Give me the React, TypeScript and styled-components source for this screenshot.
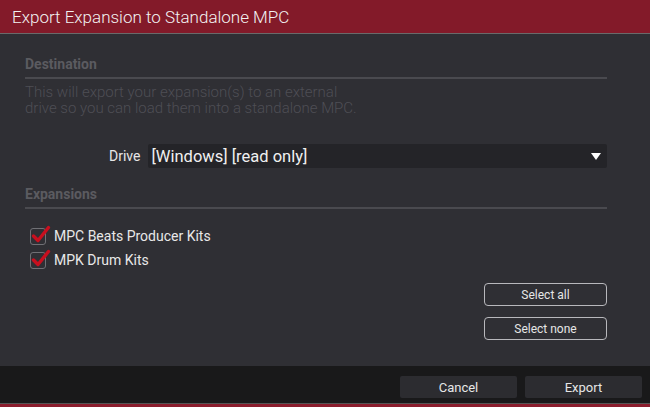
import { FC, useState } from 'react';
import styled, { createGlobalStyle } from 'styled-components';

const GlobalStyle = createGlobalStyle`
  html, body {
    margin: 0;
    padding: 0;
    background: #2f2f34;
  }
  body {
    font-family: Roboto, "Liberation Sans", sans-serif;
  }
`;

const Window = styled.div`
  width: 650px;
  height: 407px;
  display: flex;
  flex-direction: column;
  background: #2f2f34;
  overflow: hidden;
`;

const TitleBar = styled.div`
  height: 33px;
  flex-shrink: 0;
  background: #831a29;
  border-bottom: 1px solid #6a6a6a;
  display: flex;
  align-items: center;
  padding-left: 12px;
  color: #f2f2f2;
  font-size: 17px;
  font-weight: 300;
`;

const Body = styled.div`
  flex: 1;
  padding: 22px 43px 0 25px;
  display: flex;
  flex-direction: column;
`;

const SectionTitle = styled.div`
  color: #5b5b60;
  font-weight: bold;
  font-size: 14px;
  line-height: 16px;
  padding-bottom: 5px;
  border-bottom: 2px solid #4a4a4f;
`;

const Description = styled.div`
  color: #4e4e54;
  font-size: 15px;
  font-weight: 300;
  line-height: 16px;
  margin-top: 5px;
  width: 345px;
`;

const DriveRow = styled.div`
  display: flex;
  align-items: center;
  margin-top: 28px;
  padding-left: 84px;
  gap: 8px;
`;

const DriveLabel = styled.div`
  color: #e6e6e6;
  font-size: 14px;
`;

const Select = styled.div`
  flex: 1;
  height: 24px;
  background: #242428;
  border-radius: 2px;
  display: flex;
  align-items: center;
  justify-content: space-between;
  padding: 0 6px 0 3px;
  color: #f0f0f0;
  font-size: 16.5px;
`;

const Arrow = styled.div`
  width: 0;
  height: 0;
  border-left: 5px solid transparent;
  border-right: 5px solid transparent;
  border-top: 7px solid #ffffff;
`;

const ExpansionsTitle = styled(SectionTitle)`
  margin-top: 18px;
`;

const List = styled.div`
  margin-top: 18px;
  padding-left: 5px;
  display: flex;
  flex-direction: column;
  gap: 6px;
`;

const Row = styled.label`
  display: flex;
  align-items: center;
  height: 18px;
  gap: 8px;
  color: #e8e8e8;
  font-size: 14px;
  cursor: pointer;
`;

const Box = styled.span`
  position: relative;
  width: 14px;
  height: 15px;
  border: 1.5px solid #707075;
  border-radius: 3px;
  flex-shrink: 0;
`;

const Tick = styled.svg`
  position: absolute;
  left: 0px;
  top: -5px;
`;

const Buttons = styled.div`
  margin-top: 14px;
  display: flex;
  flex-direction: column;
  align-items: flex-end;
  gap: 11px;
`;

const OutlineButton = styled.div`
  width: 121px;
  height: 21px;
  border: 1.5px solid #b8b8bc;
  border-radius: 4px;
  display: flex;
  align-items: center;
  justify-content: center;
  color: #e6e6e6;
  font-size: 12px;
  cursor: pointer;
`;

const Footer = styled.div`
  height: 38px;
  flex-shrink: 0;
  background: #19191a;
  display: flex;
  justify-content: flex-end;
  align-items: flex-start;
  padding: 10px 8px 0 0;
  gap: 8px;
  box-sizing: border-box;
  border-bottom: 1px solid #555;
`;

const FooterButton = styled.div`
  width: 117px;
  height: 22px;
  background: #2c2c30;
  border-radius: 2px;
  display: flex;
  align-items: center;
  justify-content: center;
  color: #e6e6e6;
  font-size: 13px;
  cursor: pointer;
`;

const BottomStripe = styled.div`
  height: 3px;
  background: #8b1d2d;
  flex-shrink: 0;
`;

const Checkbox: FC<{ checked: boolean }> = ({ checked }) => (
  <Box>
    {checked && (
      <Tick width="20" height="20" viewBox="0 0 20 20">
        <path
          d="M2.5 12 L7 16.5 L17.5 3.5"
          fill="none"
          stroke="#c80f1e"
          strokeWidth="3.4"
          strokeLinecap="round"
          strokeLinejoin="round"
        />
      </Tick>
    )}
  </Box>
);

const App: FC = () => {
  const [items, setItems] = useState([
    { name: 'MPC Beats Producer Kits', checked: true },
    { name: 'MPK Drum Kits', checked: true },
  ]);

  const toggle = (index: number) => {
    setItems(items.map((it, i) => (i === index ? { ...it, checked: !it.checked } : it)));
  };

  const setAll = (value: boolean) => {
    setItems(items.map((it) => ({ ...it, checked: value })));
  };

  return (
    <Window>
      <GlobalStyle />
      <TitleBar>Export Expansion to Standalone MPC</TitleBar>
      <Body>
        <SectionTitle>Destination</SectionTitle>
        <Description>
          This will export your expansion(s) to an external drive so you can load them into a
          standalone MPC.
        </Description>
        <DriveRow>
          <DriveLabel>Drive</DriveLabel>
          <Select>
            <span>[Windows] [read only]</span>
            <Arrow />
          </Select>
        </DriveRow>
        <ExpansionsTitle>Expansions</ExpansionsTitle>
        <List>
          {items.map((item, index) => (
            <Row key={item.name} onClick={() => toggle(index)}>
              <Checkbox checked={item.checked} />
              {item.name}
            </Row>
          ))}
        </List>
        <Buttons>
          <OutlineButton onClick={() => setAll(true)}>Select all</OutlineButton>
          <OutlineButton onClick={() => setAll(false)}>Select none</OutlineButton>
        </Buttons>
      </Body>
      <Footer>
        <FooterButton>Cancel</FooterButton>
        <FooterButton>Export</FooterButton>
      </Footer>
      <BottomStripe />
    </Window>
  );
};

export default App;
